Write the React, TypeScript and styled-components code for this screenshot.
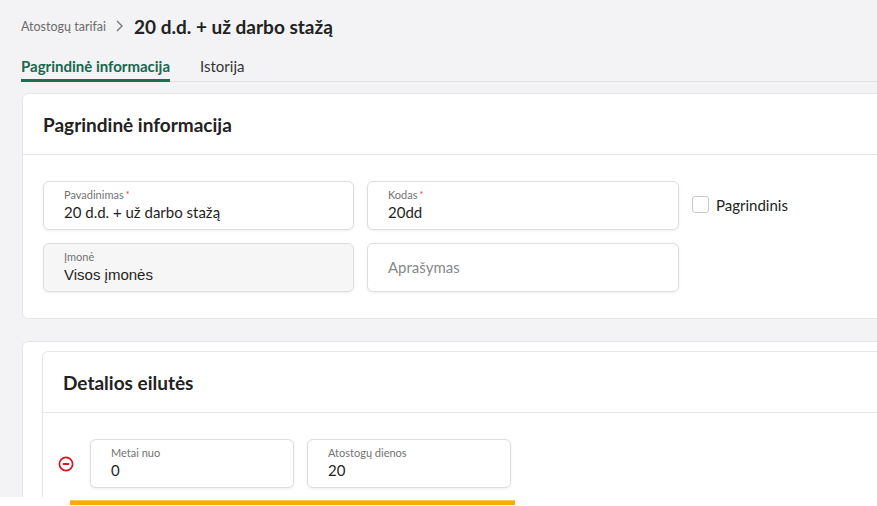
import styled, { createGlobalStyle } from "styled-components";

const GlobalStyle = createGlobalStyle`
  html, body {
    margin: 0;
    background: #f3f3f5;
    overflow: hidden;
  }

  body {
    font-family: Lato, "Noto Sans", sans-serif;
    color: #222;
  }
`;

const Page = styled.div`
  width: 1000px;
  padding: 12px 0 0 21px;
`;

const Breadcrumb = styled.div`
  display: flex;
  align-items: center;
  height: 28px;

  .parent {
    font-size: 12.5px;
    color: #6b6b6b;
  }

  .chevron {
    margin: 0 10px 0 9px;
    color: #777;
    display: flex;
  }

  h1 {
    margin: 0;
    font-size: 19px;
    font-weight: 700;
    color: #222;
  }
`;

const Tabs = styled.div`
  display: flex;
  gap: 30px;
  margin-top: 13px;
  border-bottom: 1px solid #e1e1e4;
`;

const Tab = styled.div<{ $active?: boolean }>`
  font-size: 15px;
  line-height: 17px;
  font-weight: ${(p) => (p.$active ? 700 : 400)};
  color: ${(p) => (p.$active ? "#17684e" : "#333")};
  padding: 5px 0 4px;
  margin-bottom: -1px;
  border-bottom: 3px solid ${(p) => (p.$active ? "#17734f" : "transparent")};
`;

const Card = styled.section`
  margin: 11px 0 0 1px;
  background: #fff;
  border: 1px solid #e6e6e9;
  border-radius: 6px;
`;

const OuterCard = styled(Card)`
  margin-top: 22px;
  padding: 9px 0 0 19px;
  border-bottom: none;
  border-radius: 6px 6px 0 0;
`;

const InnerCard = styled.div`
  border: 1px solid #e6e6e9;
  border-bottom: none;
  border-radius: 6px 0 0 0;
`;

const CardHeader = styled.div`
  height: 60px;
  display: flex;
  align-items: center;
  padding-left: 20px;
  border-bottom: 1px solid #e6e6e9;

  h2 {
    margin: 0;
    font-size: 19px;
    font-weight: 700;
    color: #222;
  }
`;

const FormGrid = styled.div`
  display: grid;
  grid-template-columns: 311px 312px auto;
  gap: 13px;
  padding: 26px 20px;
`;

const Field = styled.div<{ $disabled?: boolean; $width?: number }>`
  box-sizing: border-box;
  height: 49px;
  width: ${(p) => (p.$width ? `${p.$width}px` : "auto")};
  padding: 6px 20px 0;
  border: 1px solid #dedede;
  border-radius: 6px;
  background: ${(p) => (p.$disabled ? "#f6f6f6" : "#fff")};
  box-shadow: 0 1px 3px rgba(0, 0, 0, 0.07);
  display: flex;
  flex-direction: column;
`;

const Label = styled.span`
  font-size: 11px;
  color: #737373;
  line-height: 14px;

  .req {
    color: #e0344a;
    font-size: 9px;
    vertical-align: top;
    margin-left: 2px;
  }
`;

const Value = styled.span<{ $plain?: boolean }>`
  font-family: ${(p) => (p.$plain ? '"Liberation Sans", Arial, sans-serif' : "inherit")};
  font-size: 15px;
  line-height: 21px;
  color: #1f1f1f;
`;

const Placeholder = styled.span`
  font-size: 15px;
  color: #888;
  line-height: 47px;
  margin-top: -6px;
`;

const CheckRow = styled.label`
  display: flex;
  align-items: center;
  gap: 7px;
  height: 49px;
  margin-top: -1px;
  font-size: 15px;
  color: #222;

  .box {
    width: 15px;
    height: 15px;
    border: 1px solid #c9c9c9;
    border-radius: 3px;
    background: #fff;
  }
`;

const DetailRow = styled.div`
  display: flex;
  align-items: center;
  gap: 13px;
  padding: 26px 0 9px 15px;
`;

const RemoveButton = styled.button`
  border: none;
  background: none;
  padding: 0;
  margin-right: 3px;
  display: flex;
  cursor: pointer;
`;

const BottomBar = styled.div`
  position: fixed;
  left: 0;
  right: 0;
  bottom: 0;
  height: 9px;
  background: #fff;

  .progress {
    margin: 3px 0 0 70px;
    width: 445px;
    height: 5px;
    background: #ffaa00;
    border-top: 1px solid #ffc24d;
    box-sizing: border-box;
  }
`;

function MinusCircle() {
  return (
    <svg width="16" height="16" viewBox="0 0 16 16">
      <circle cx="8" cy="8" r="6.6" fill="none" stroke="#d9161f" strokeWidth="1.7" />
      <rect x="4.6" y="6.9" width="6.8" height="2.2" rx="1" fill="#d9161f" />
    </svg>
  );
}

function App() {
  return (
    <>
      <GlobalStyle />
      <Page>
        <Breadcrumb>
          <span className="parent">Atostogų tarifai</span>
          <span className="chevron">
            <svg width="9" height="14" viewBox="0 0 9 14">
              <path d="M2 2l5 5-5 5" fill="none" stroke="currentColor" strokeWidth="1.4" />
            </svg>
          </span>
          <h1>20 d.d. + už darbo stažą</h1>
        </Breadcrumb>

        <Tabs>
          <Tab $active>Pagrindinė informacija</Tab>
          <Tab>Istorija</Tab>
        </Tabs>

        <Card>
          <CardHeader>
            <h2>Pagrindinė informacija</h2>
          </CardHeader>
          <FormGrid>
            <Field>
              <Label>
                Pavadinimas<span className="req">*</span>
              </Label>
              <Value>20 d.d. + už darbo stažą</Value>
            </Field>
            <Field>
              <Label>
                Kodas<span className="req">*</span>
              </Label>
              <Value>20dd</Value>
            </Field>
            <CheckRow>
              <span className="box" />
              Pagrindinis
            </CheckRow>
            <Field $disabled>
              <Label>Įmonė</Label>
              <Value $plain>Visos įmonės</Value>
            </Field>
            <Field>
              <Placeholder>Aprašymas</Placeholder>
            </Field>
          </FormGrid>
        </Card>

        <OuterCard>
          <InnerCard>
            <CardHeader>
              <h2>Detalios eilutės</h2>
            </CardHeader>
            <DetailRow>
              <RemoveButton type="button">
                <MinusCircle />
              </RemoveButton>
              <Field $width={204}>
                <Label>Metai nuo</Label>
                <Value>0</Value>
              </Field>
              <Field $width={204}>
                <Label>Atostogų dienos</Label>
                <Value>20</Value>
              </Field>
            </DetailRow>
          </InnerCard>
        </OuterCard>
      </Page>
      <BottomBar>
        <div className="progress" />
      </BottomBar>
    </>
  );
}

export default App;
